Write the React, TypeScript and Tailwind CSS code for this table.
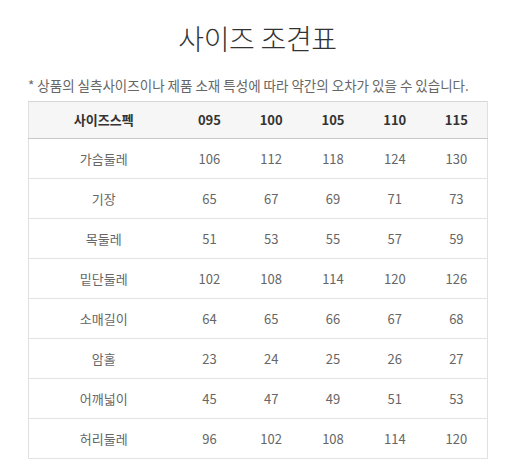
import React from "react";

const cols = ["095", "100", "105", "110", "115"];
const rows: [string, number[]][] = [
  ["가슴둘레", [106, 112, 118, 124, 130]],
  ["기장", [65, 67, 69, 71, 73]],
  ["목둘레", [51, 53, 55, 57, 59]],
  ["밑단둘레", [102, 108, 114, 120, 126]],
  ["소매길이", [64, 65, 66, 67, 68]],
  ["암홀", [23, 24, 25, 26, 27]],
  ["어깨넓이", [45, 47, 49, 51, 53]],
  ["허리둘레", [96, 102, 108, 114, 120]],
];

export default function App() {
  return (
    <div
      className="w-[515px] h-[473px] bg-white"
      style={{ fontFamily: '"Noto Sans CJK KR", "Noto Sans", sans-serif' }}
    >
      <div className="pt-[18px] text-center text-[28px] leading-[40px] text-[#333] font-light tracking-[-0.3px]">
        사이즈 조견표
      </div>
      <div className="mt-[18px] pl-[28px] text-[13.5px] leading-[18px] text-[#666]">
        * 상품의 실측사이즈이나 제품 소재 특성에 따라 약간의 오차가 있을 수 있습니다.
      </div>
      <table className="mt-[7px] ml-[28px] w-[460px] border-collapse table-fixed text-[13px]">
        <colgroup>
          <col className="w-[150px]" />
          <col />
          <col />
          <col />
          <col />
          <col />
        </colgroup>
        <thead>
          <tr className="h-[37px] bg-[#f6f6f6] border-t border-b border-t-[#d6d6d6] border-b-[#c8c8c8] border-x border-x-[#e0e0e0]">
            <th className="font-bold text-[#333] text-center p-0">사이즈스펙</th>
            {cols.map((c) => (
              <th key={c} className="font-bold text-[#333] text-center p-0">
                {c}
              </th>
            ))}
          </tr>
        </thead>
        <tbody>
          {rows.map(([name, vals]) => (
            <tr key={name} className="h-[40px] border-b border-[#e3e3e3] border-x border-x-[#e0e0e0]">
              <td className="text-center text-[#666] p-0">{name}</td>
              {vals.map((v, i) => (
                <td key={i} className="text-center text-[#666] p-0">
                  {v}
                </td>
              ))}
            </tr>
          ))}
        </tbody>
      </table>
    </div>
  );
}
